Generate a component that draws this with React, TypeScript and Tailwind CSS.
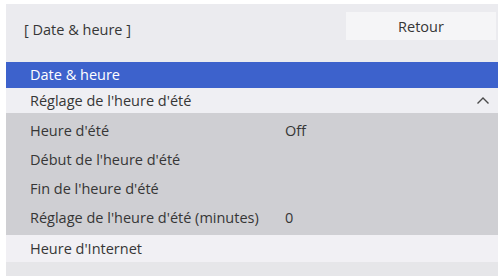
import React from 'react';

const subItems = [
  { label: "Heure d'été", value: 'Off' },
  { label: "Début de l'heure d'été", value: '' },
  { label: "Fin de l'heure d'été", value: '' },
  { label: "Réglage de l'heure d'été (minutes)", value: '0' },
];

const ChevronUp: React.FC = () => (
  <svg width="14" height="9" viewBox="0 0 14 9" fill="none">
    <path d="M1.5 7.5 L7 2 L12.5 7.5" stroke="#4a4a4a" strokeWidth="1.4" />
  </svg>
);

const App: React.FC = () => {
  return (
    <div className="w-[504px] h-[276px] bg-white pt-[4px] pl-[6px] pr-[6px] overflow-hidden" style={{ fontFamily: '"Open Sans", "Noto Sans", sans-serif' }}>
      <div className="h-[272px] bg-[#ebebef] flex flex-col text-[14.5px] text-[#363636]">
        {/* header */}
        <div className="h-[58px] flex items-start justify-between">
          <div className="pl-[18px] pt-[16px] leading-[20px]">[ Date &amp; heure ]</div>
          <button className="mt-[8px] mr-[2px] w-[150px] h-[28px] bg-[#f5f5f7] text-[#363636] text-[14.5px] leading-[20px] pt-[2px]">
            Retour
          </button>
        </div>

        <div className="h-[26px] bg-[#3d62cc] text-white flex items-center pl-[24px]">Date &amp; heure</div>

        <div className="h-[25px] bg-[#efeff3] flex items-center justify-between pl-[24px] pr-[8px]">
          <span>Réglage de l'heure d'été</span>
          <ChevronUp />
        </div>

        <div className="bg-[#cfcfd3] py-[3px]">
          {subItems.map((item) => (
            <div key={item.label} className="h-[29px] flex items-center pl-[24px]">
              <span className="w-[255px]">{item.label}</span>
              <span>{item.value}</span>
            </div>
          ))}
        </div>

        <div className="h-[27px] bg-[#f1f0f4] flex items-center pl-[24px]">Heure d'Internet</div>

        <div className="flex-1 bg-[#e6e6e9]" />
      </div>
    </div>
  );
};

export default App;
